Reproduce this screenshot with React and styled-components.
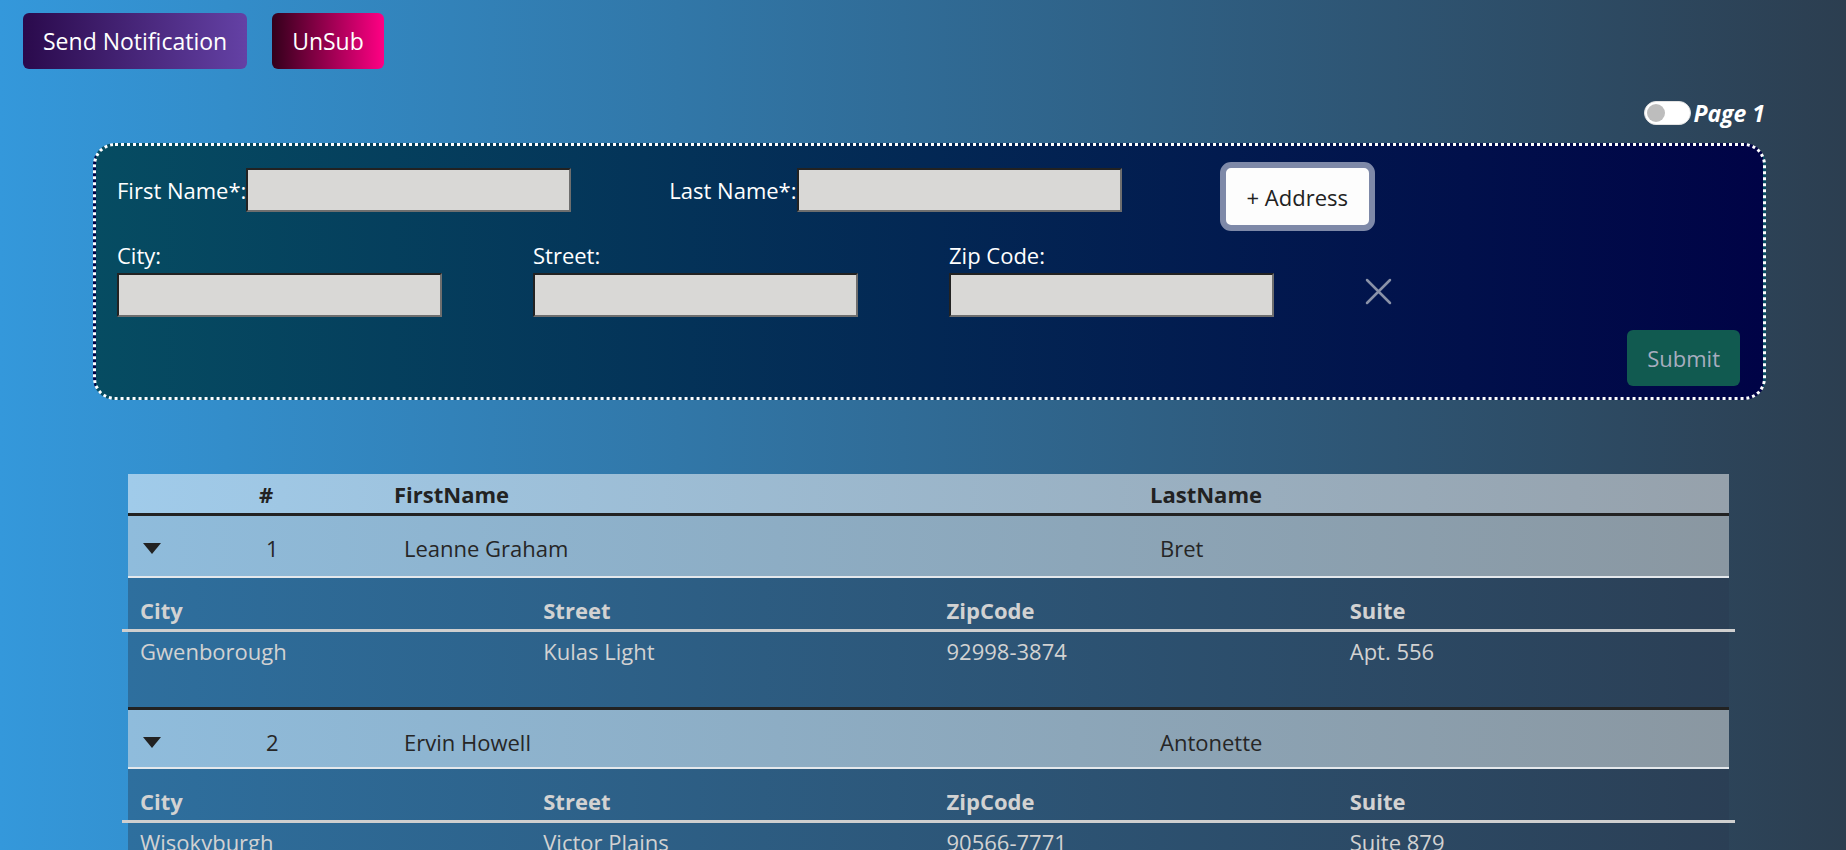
import React from "react";
import styled, { createGlobalStyle } from "styled-components";

const GlobalStyle = createGlobalStyle`
  html { scrollbar-width: none; }
  html::-webkit-scrollbar { display: none; }
  body {
    margin: 0;
    min-height: 100vh;
    background: linear-gradient(to right, #3498db, #2c3e50);
    font-family: "Open Sans", "Noto Sans", sans-serif;
    font-size: 22px;
    line-height: 30px;
    color: #222;
  }
  * { box-sizing: border-box; }
`;

const users = [
  { id: 1, name: "Leanne Graham", username: "Bret", city: "Gwenborough", street: "Kulas Light", zip: "92998-3874", suite: "Apt. 556" },
  { id: 2, name: "Ervin Howell", username: "Antonette", city: "Wisokyburgh", street: "Victor Plains", zip: "90566-7771", suite: "Suite 879" },
];

const TopBar = styled.div`
  display: flex;
  gap: 25px;
  padding: 13px 0 0 23px;
`;

const GradientButton = styled.button`
  height: 56px;
  padding: 0 20px;
  border: none;
  border-radius: 6px;
  font: inherit;
  font-size: 23px;
  color: #fff;
  cursor: pointer;
  background: ${(p) => p.$bg};
`;

const PagerRow = styled.div`
  display: flex;
  justify-content: flex-end;
  align-items: center;
  gap: 2px;
  height: 25px;
  margin: 31px 81px 0 0;
`;

const Toggle = styled.span`
  position: relative;
  display: inline-block;
  width: 47px;
  height: 24px;
  border-radius: 12px;
  background: #fff;
  border: 1px solid #e2e2e2;
  &::after {
    content: "";
    position: absolute;
    left: 2px;
    top: 2px;
    width: 18px;
    height: 18px;
    border-radius: 50%;
    background: #bdbdbd;
  }
`;

const PageLabel = styled.span`
  color: #fff;
  font-weight: 700;
  font-style: italic;
  font-size: 23px;
`;

const Panel = styled.form`
  margin: 18px 80px 0 93px;
  padding: 16px 23px 11px 21px;
  border: 3px dotted #fff;
  border-radius: 22px;
  background: linear-gradient(to right, #064c62, #000346);
  color: #fff;
`;

const NameRow = styled.div`
  display: flex;
  align-items: flex-start;
  gap: 98px;
`;

const InlineField = styled.label`
  display: flex;
  align-items: center;
  margin-top: 6px;
`;

const TextInput = styled.input`
  width: 325px;
  height: 44px;
  border-style: solid;
  border-width: 2px;
  border-color: #222 #6e6e6e #6e6e6e #222;
  background: #d9d8d6;
  font: inherit;
  padding: 0 6px;
`;

const AddressButton = styled.button`
  height: 69px;
  padding: 0 21px;
  border: 6px solid #7e89a8;
  border-radius: 11px;
  background: #fdfdfd;
  font: inherit;
  color: #222;
  cursor: pointer;
`;

const AddressGrid = styled.div`
  display: grid;
  grid-template-columns: repeat(3, 416px) auto;
  align-items: end;
  margin-top: 9px;
`;

const StackField = styled.label`
  display: flex;
  flex-direction: column;
  align-items: flex-start;
  gap: 3px;
`;

const CloseButton = styled.button`
  justify-self: start;
  width: 27px;
  height: 27px;
  margin-bottom: 12px;
  padding: 0;
  border: none;
  background: none;
  cursor: pointer;
  display: flex;
`;

const SubmitRow = styled.div`
  display: flex;
  justify-content: flex-end;
  margin-top: 13px;
`;

const SubmitButton = styled.button`
  height: 56px;
  padding: 0 20px;
  border: none;
  border-radius: 6px;
  background: #115a50;
  color: #a7adbf;
  font: inherit;
`;

const Table = styled.div`
  width: 1601px;
  margin: 74px 0 0 128px;
`;

const HeadRow = styled.div`
  display: grid;
  grid-template-columns: 120px 146px 756px 1fr;
  height: 42px;
  padding-top: 5px;
  border-bottom: 3px solid #222;
  background: linear-gradient(to right, #a0cbea, #96a1ab);
  font-weight: 700;
  color: #222;
`;

const HeadCell = styled.div`
  padding-left: ${(p) => p.$pad || 0}px;
`;

const UserRow = styled.div`
  display: grid;
  grid-template-columns: 120px 146px 756px 1fr;
  align-items: start;
  height: 62px;
  padding-top: 17px;
  border-top: ${(p) => (p.$first ? "none" : "3px solid #222")};
  border-bottom: 2px solid #e4e8ec;
  background: linear-gradient(to right, #8fbcdc, #8a97a1);
  color: #262626;
`;

const Cell = styled.div`
  padding-left: ${(p) => p.$pad}px;
`;

const CaretCell = styled.div`
  padding: 10px 0 0 15px;
  display: flex;
`;

const Detail = styled.div`
  padding: 17px 0 41px;
  background: linear-gradient(to right, #2e6f9e, #2b3f55);
  color: #d2d2d2;
`;

const DetailGrid = styled.div`
  display: grid;
  grid-template-columns: repeat(4, 1fr);
  margin: 0 -6px;
  padding-bottom: ${(p) => (p.$head ? 4 : 0)}px;
  padding-top: ${(p) => (p.$head ? 0 : 4)}px;
  border-bottom: ${(p) => (p.$head ? "3px solid #cfcfcf" : "none")};
  font-weight: ${(p) => (p.$head ? 700 : 400)};
`;

const DetailCell = styled.div`
  padding-left: 18px;
`;

const Caret = () => (
  <svg width="18" height="11" viewBox="0 0 18 11">
    <polygon points="0,0 18,0 9,11" fill="#222" />
  </svg>
);

const XIcon = () => (
  <svg width="27" height="27" viewBox="0 0 27 27">
    <path d="M2 2 L25 25 M25 2 L2 25" stroke="#8a92a8" strokeWidth="2.5" strokeLinecap="round" />
  </svg>
);

export default function App() {
  return (
    <>
      <GlobalStyle />
      <TopBar>
        <GradientButton $bg="linear-gradient(to right, #2a0a4c, #6441a5)">Send Notification</GradientButton>
        <GradientButton $bg="linear-gradient(to right, #33001b, #ff0084)">UnSub</GradientButton>
      </TopBar>

      <PagerRow>
        <Toggle />
        <PageLabel>Page 1</PageLabel>
      </PagerRow>

      <Panel onSubmit={(e) => e.preventDefault()}>
        <NameRow>
          <InlineField>
            First Name*:
            <TextInput />
          </InlineField>
          <InlineField>
            Last Name*:
            <TextInput />
          </InlineField>
          <AddressButton type="button">+ Address</AddressButton>
        </NameRow>
        <AddressGrid>
          <StackField>
            City:
            <TextInput />
          </StackField>
          <StackField>
            Street:
            <TextInput />
          </StackField>
          <StackField>
            Zip Code:
            <TextInput />
          </StackField>
          <CloseButton type="button" aria-label="remove address">
            <XIcon />
          </CloseButton>
        </AddressGrid>
        <SubmitRow>
          <SubmitButton type="submit" disabled>Submit</SubmitButton>
        </SubmitRow>
      </Panel>

      <Table>
        <HeadRow>
          <HeadCell />
          <HeadCell $pad={11}>#</HeadCell>
          <HeadCell>FirstName</HeadCell>
          <HeadCell>LastName</HeadCell>
        </HeadRow>
        {users.map((u, i) => (
          <React.Fragment key={u.id}>
            <UserRow $first={i === 0}>
              <CaretCell>
                <Caret />
              </CaretCell>
              <Cell $pad={18}>{u.id}</Cell>
              <Cell $pad={10}>{u.name}</Cell>
              <Cell $pad={10}>{u.username}</Cell>
            </UserRow>
            <Detail>
              <DetailGrid $head>
                <DetailCell>City</DetailCell>
                <DetailCell>Street</DetailCell>
                <DetailCell>ZipCode</DetailCell>
                <DetailCell>Suite</DetailCell>
              </DetailGrid>
              <DetailGrid>
                <DetailCell>{u.city}</DetailCell>
                <DetailCell>{u.street}</DetailCell>
                <DetailCell>{u.zip}</DetailCell>
                <DetailCell>{u.suite}</DetailCell>
              </DetailGrid>
            </Detail>
          </React.Fragment>
        ))}
      </Table>
    </>
  );
}
